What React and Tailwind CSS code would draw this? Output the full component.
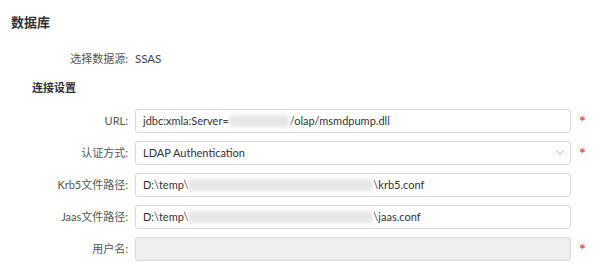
const rows = [
  { label: "URL:", required: true, parts: ["jdbc:xmla:Server=", 61, "/olap/msmdpump.dll"] },
  { label: "认证方式:", required: true, select: true, parts: ["LDAP Authentication"] },
  { label: "Krb5文件路径:", parts: ["D:\\temp\\", 185, "\\krb5.conf"] },
  { label: "Jaas文件路径:", parts: ["D:\\temp\\", 185, "\\jaas.conf"] },
  { label: "用户名:", required: true, disabled: true, parts: [] },
];

const Blur = ({ w }) => (
  <span className="inline-block h-[12px] rounded-sm bg-[#e6e6e6] blur-[2px]" style={{ width: w }} />
);

const App = () => {
  return (
    <div
      className="w-[606px] h-[275px] bg-white text-[#333] overflow-hidden"
      style={{ fontFamily: 'Lato, "Noto Sans CJK SC", sans-serif' }}
    >
      <div className="pl-[11px] pt-[13px] h-[18px] box-content text-[13px] leading-[18px] font-semibold text-[#333]">数据库</div>
      <div className="flex items-center mt-[19px] h-[18px] text-[11px]">
        <span className="w-[128px] text-right text-[#555]">选择数据源:</span>
        <span className="ml-[7px] text-[#444] text-[11.5px]">SSAS</span>
      </div>
      <div className="pl-[32px] mt-[11px] h-[18px] leading-[18px] text-[11px] font-bold text-[#333]">连接设置</div>
      <div className="mt-[12px] flex flex-col gap-[8.5px]">
        {rows.map((r) => (
          <div key={r.label} className="flex items-center h-[23.5px]">
            <span className="w-[128px] text-right text-[11px] text-[#555]">{r.label}</span>
            <div
              className={`ml-[7px] w-[436px] h-full flex items-center px-[7px] rounded-[3px] border border-[#d9d9d9] text-[11px] text-[#333] ${r.disabled ? "bg-[#efefef]" : "bg-white"}`}
            >
              {r.parts.map((p, i) =>
                typeof p === "number" ? <Blur key={i} w={p} /> : <span key={i} className="whitespace-pre">{p}</span>
              )}
              {r.select && (
                <svg className="ml-auto mr-[-1px]" width="8" height="5" viewBox="0 0 8 5" fill="none">
                  <path d="M0.5 0.5L4 4L7.5 0.5" stroke="#aaa" strokeWidth="0.9" />
                </svg>
              )}
            </div>
            {r.required && (
              <span className="ml-[8px] text-[#f5484d] text-[16px] leading-none font-bold mt-[1px]">*</span>
            )}
          </div>
        ))}
      </div>
    </div>
  );
};

export default App;
